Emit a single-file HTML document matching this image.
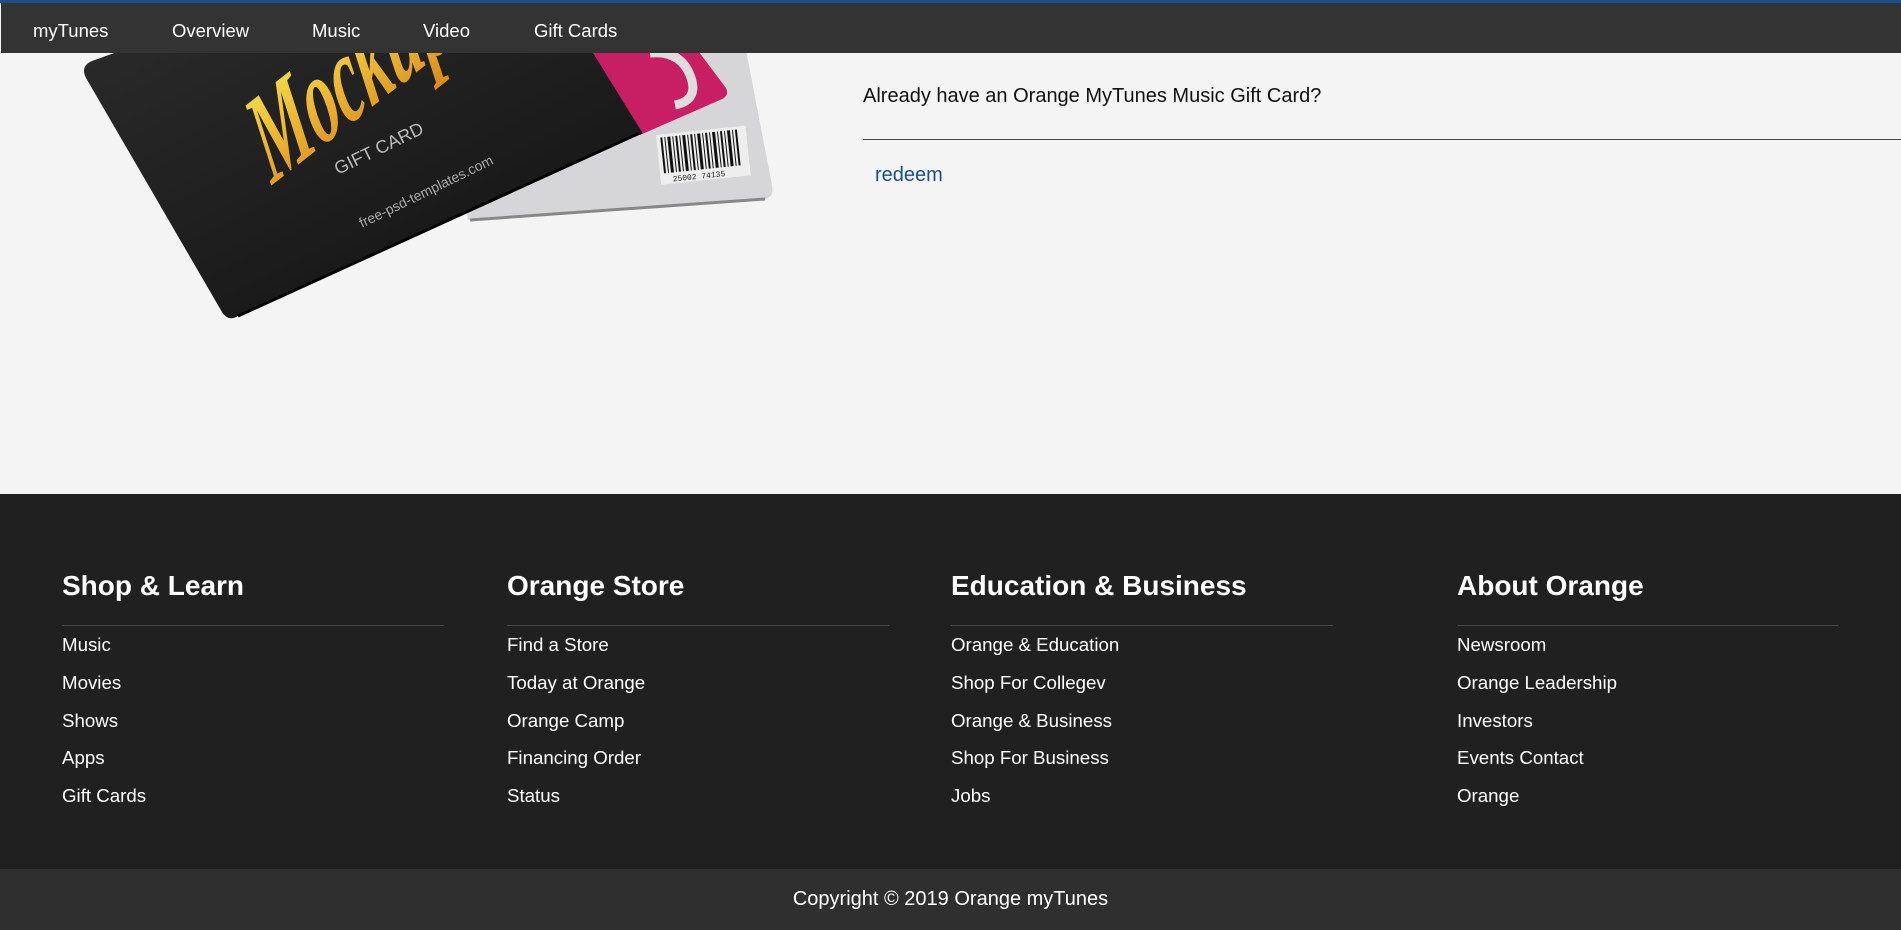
<!DOCTYPE html>
<html><head><meta charset="utf-8"><style>
*{margin:0;padding:0;box-sizing:border-box}
body{width:1901px;height:930px;overflow:hidden;background:#f4f4f4;font-family:"Liberation Sans",Arial,sans-serif;position:relative}
.topline{position:absolute;left:0;top:0;width:1901px;height:3px;background:#1b4f8a;z-index:5}
.nav{position:absolute;left:1px;top:3px;width:1900px;height:50px;background:#333;z-index:4}
.nav span{position:absolute;top:17px;color:#fff;font-size:18.5px;line-height:21px}
.q{position:absolute;left:863px;top:85px;font-size:20px;color:#111}
.hr{position:absolute;left:863px;top:139px;width:1038px;height:1px;background:#444}
.redeem{position:absolute;left:875px;top:164px;font-size:20px;color:#1c4f8c}
.footer{position:absolute;left:0;top:494px;width:1901px;height:375px;background:#202020}
.col{position:absolute;top:0}
.col h3{position:absolute;top:76px;left:0;font-size:28px;color:#fff;font-weight:bold;white-space:nowrap}
.col .line{position:absolute;top:131px;left:0;width:382px;height:1px;background:#444}
.col a{position:absolute;left:0;color:#fff;font-size:18.7px;text-decoration:none;white-space:nowrap}
.bottom{position:absolute;left:0;top:869px;width:1901px;height:61px;background:#2f2f2f;color:#fff;font-size:20px;text-align:center;line-height:61px}
</style></head><body>
<div class="topline"></div>
<div class="nav">
<span style="left:32px">myTunes</span>
<span style="left:171px">Overview</span>
<span style="left:311px">Music</span>
<span style="left:422px">Video</span>
<span style="left:533px">Gift Cards</span>
</div>
<svg style="position:absolute;left:0;top:0" width="800" height="330" viewBox="0 0 800 330">
<defs>
<linearGradient id="gold" x1="0" y1="1" x2="0" y2="0"><stop offset="0" stop-color="#d98a1e"/><stop offset="0.6" stop-color="#f0c43a"/><stop offset="1" stop-color="#f3e65a"/></linearGradient>
<linearGradient id="blk" x1="0" y1="0" x2="1" y2="1"><stop offset="0" stop-color="#2a2a2a"/><stop offset="1" stop-color="#111"/></linearGradient>
</defs>
<path d="M440 40 L744 40 L772 185 Q775 198 762 200 L468 220 Z" fill="#d6d6d8"/>
<path d="M470 220 L765 199" stroke="#888" stroke-width="3" fill="none"/>
<path d="M560 40 L690 40 L726 88 Q730 96 720 100 L640 135 L600 130 Z" fill="#c81e63"/>
<path d="M650 53 Q680 50 690 75 Q700 100 675 105" stroke="#ddd" stroke-width="9" fill="none"/>
<g transform="translate(656,135) rotate(-6)">
<rect x="0" y="0" width="90" height="50" fill="#eee"/>
<g fill="#111">
<rect x="4" y="3" width="2" height="36"/><rect x="8" y="3" width="1" height="36"/><rect x="11" y="3" width="3" height="36"/><rect x="16" y="3" width="1" height="36"/><rect x="19" y="3" width="2" height="36"/><rect x="23" y="3" width="1" height="36"/><rect x="26" y="3" width="3" height="36"/><rect x="31" y="3" width="1" height="36"/><rect x="34" y="3" width="2" height="36"/><rect x="38" y="3" width="1" height="36"/><rect x="41" y="3" width="3" height="36"/><rect x="46" y="3" width="1" height="36"/><rect x="49" y="3" width="2" height="36"/><rect x="53" y="3" width="1" height="36"/><rect x="56" y="3" width="3" height="36"/><rect x="61" y="3" width="1" height="36"/><rect x="64" y="3" width="2" height="36"/><rect x="68" y="3" width="1" height="36"/><rect x="71" y="3" width="3" height="36"/><rect x="76" y="3" width="1" height="36"/><rect x="79" y="3" width="2" height="36"/>
</g>
<text x="12" y="48" font-size="8" fill="#222" font-family="Liberation Mono">25002 74135</text>
</g>
<path d="M150 40 L585 40 L642 132 L238 316 Q228 322 222 312 L86 78 Q80 66 92 61 Z" fill="url(#blk)"/>
<path d="M238 316 L642 132" stroke="#000" stroke-width="3"/>
<text transform="translate(272,185) rotate(-38) skewX(-15) scale(0.8,1.4)" font-family="Liberation Serif" font-style="italic" font-weight="bold" font-size="86" fill="url(#gold)">Mockup</text>
<text transform="translate(338,175) rotate(-26)" font-size="18" fill="#bbb" font-family="Liberation Sans">GIFT CARD</text>
<text transform="translate(362,228) rotate(-26)" font-size="14" fill="#aaa" font-family="Liberation Sans">free-psd-templates.com</text>
</svg>
<div class="q">Already have an Orange MyTunes Music Gift Card?</div>
<div class="hr"></div>
<div class="redeem">redeem</div>
<div class="footer">
<div class="col" style="left:62px"><h3>Shop &amp; Learn</h3><div class="line"></div>
<a style="top:140px">Music</a><a style="top:178px">Movies</a><a style="top:216px">Shows</a><a style="top:253px">Apps</a><a style="top:291px">Gift Cards</a></div>
<div class="col" style="left:507px"><h3>Orange Store</h3><div class="line"></div>
<a style="top:140px">Find a Store</a><a style="top:178px">Today at Orange</a><a style="top:216px">Orange Camp</a><a style="top:253px">Financing Order</a><a style="top:291px">Status</a></div>
<div class="col" style="left:951px"><h3>Education &amp; Business</h3><div class="line"></div>
<a style="top:140px">Orange &amp; Education</a><a style="top:178px">Shop For Collegev</a><a style="top:216px">Orange &amp; Business</a><a style="top:253px">Shop For Business</a><a style="top:291px">Jobs</a></div>
<div class="col" style="left:1457px"><h3>About Orange</h3><div class="line"></div>
<a style="top:140px">Newsroom</a><a style="top:178px">Orange Leadership</a><a style="top:216px">Investors</a><a style="top:253px">Events Contact</a><a style="top:291px">Orange</a></div>
</div>
<div class="bottom">Copyright © 2019 Orange myTunes</div>
</body></html>
